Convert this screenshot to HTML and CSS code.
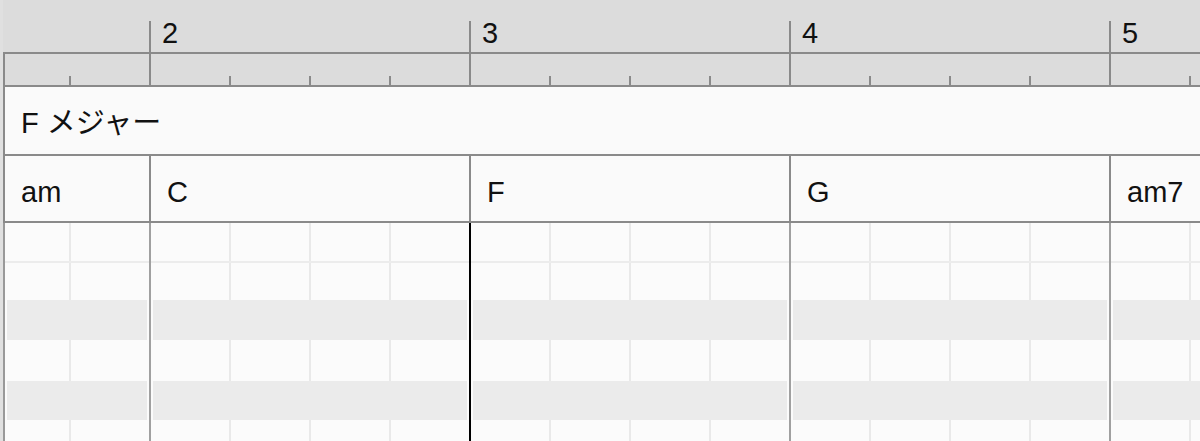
FILE: index.html
```html
<!DOCTYPE html>
<html>
    <head>
        <meta charset="utf-8" />
        <title>Chord Track</title>
        <link rel="stylesheet" href="styles.css">
    </head>
    <body>
        <div class="roll">
            <!-- Bar ruler -->
            <div class="ruler">
                <div class="numbers">
                    <div class="num-bar partial"></div>
                    <div class="num-bar">2</div>
                    <div class="num-bar">3</div>
                    <div class="num-bar">4</div>
                    <div class="num-bar">5</div>
                </div>
                <div class="ticks">
                    <div class="tick-bar partial">
                        <div class="tick"></div>
                        <div class="tick"></div>
                    </div>
                    <div class="tick-bar">
                        <div class="tick"></div>
                        <div class="tick"></div>
                        <div class="tick"></div>
                        <div class="tick"></div>
                    </div>
                    <div class="tick-bar">
                        <div class="tick"></div>
                        <div class="tick"></div>
                        <div class="tick"></div>
                        <div class="tick"></div>
                    </div>
                    <div class="tick-bar">
                        <div class="tick"></div>
                        <div class="tick"></div>
                        <div class="tick"></div>
                        <div class="tick"></div>
                    </div>
                    <div class="tick-bar">
                        <div class="tick"></div>
                        <div class="tick"></div>
                        <div class="tick"></div>
                        <div class="tick"></div>
                    </div>
                </div>
            </div>

            <!-- Key -->
            <div class="key-row">F メジャー</div>

            <!-- Chords -->
            <div class="chords">
                <div class="chord partial">am</div>
                <div class="chord">C</div>
                <div class="chord">F</div>
                <div class="chord">G</div>
                <div class="chord">am7</div>
            </div>

            <!-- Note grid -->
            <div class="grid">
                <div class="col partial">
                    <div class="row white first"></div>
                    <div class="row white second"></div>
                    <div class="row shade"></div>
                    <div class="row white fourth"></div>
                    <div class="row shade fifth"></div>
                    <div class="row white last"></div>
                </div>
                <div class="col">
                    <div class="row white first"></div>
                    <div class="row white second"></div>
                    <div class="row shade"></div>
                    <div class="row white fourth"></div>
                    <div class="row shade fifth"></div>
                    <div class="row white last"></div>
                </div>
                <div class="col playhead">
                    <div class="row white first"></div>
                    <div class="row white second"></div>
                    <div class="row shade"></div>
                    <div class="row white fourth"></div>
                    <div class="row shade fifth"></div>
                    <div class="row white last"></div>
                </div>
                <div class="col">
                    <div class="row white first"></div>
                    <div class="row white second"></div>
                    <div class="row shade"></div>
                    <div class="row white fourth"></div>
                    <div class="row shade fifth"></div>
                    <div class="row white last"></div>
                </div>
                <div class="col">
                    <div class="row white first"></div>
                    <div class="row white second"></div>
                    <div class="row shade"></div>
                    <div class="row white fourth"></div>
                    <div class="row shade fifth"></div>
                    <div class="row white last"></div>
                </div>
            </div>
        </div>
    </body>
</html>
```

FILE: styles.css
```css
* {
    box-sizing: border-box;
}

body {
    margin: 0;
    height: 441px;
    overflow: hidden;
    background-color: #e0e0e0;
    font-family: "Liberation Sans", "Noto Sans CJK JP", sans-serif;
    font-size: 29px;
    color: #111;
}

.roll {
    margin-left: 3px;
    height: 441px;
    overflow: hidden;
    display: flex;
    flex-direction: column;
}

/* Ruler */
.ruler {
    background-color: #dcdcdc;
    border-bottom: 2px solid #8a8a8a;
}

.numbers {
    display: flex;
    height: 52px;
    padding-left: 2px;
}

.num-bar {
    flex: none;
    width: 320px;
    height: 31px;
    margin-top: 21px;
    padding: 1px 0 0 11px;
    line-height: 22px;
    border-left: 2px solid #8a8a8a;
}

.num-bar.partial {
    width: 144px;
    border-left: none;
}

.ticks {
    display: flex;
    height: 33px;
    border-top: 2px solid #8a8a8a;
    border-left: 2px solid #8a8a8a;
}

.tick-bar {
    flex: none;
    display: flex;
    align-items: flex-end;
    width: 320px;
    border-left: 2px solid #8a8a8a;
}

.tick-bar.partial {
    width: 144px;
    border-left: none;
}

.tick {
    flex: none;
    width: 80px;
    height: 9px;
    border-left: 2px solid #8a8a8a;
}

.tick:first-child {
    width: 78px;
    border-left: none;
}

.tick-bar.partial .tick:first-child {
    width: 64px;
}

/* Key and chord rows */
.key-row {
    flex: none;
    height: 69px;
    padding: 5px 0 0 16px;
    line-height: 62px;
    background-color: #fafafa;
    border-left: 2px solid #8a8a8a;
    border-bottom: 2px solid #8a8a8a;
}

.chords {
    flex: none;
    display: flex;
    height: 67px;
    background-color: #fafafa;
    border-left: 2px solid #8a8a8a;
    border-bottom: 2px solid #8a8a8a;
}

.chord {
    flex: none;
    width: 320px;
    padding: 7px 0 0 16px;
    line-height: 58px;
    border-left: 2px solid #8a8a8a;
}

.chord.partial {
    width: 144px;
    border-left: none;
}

/* Grid */
.grid {
    flex: 1;
    display: flex;
    border-left: 2px solid #999;
}

.col {
    flex: none;
    display: flex;
    flex-direction: column;
    width: 320px;
    background-color: #fbfbfb;
    border-left: 2px solid #a0a0a0;
}

.col.partial {
    width: 144px;
    border-left: none;
}

.col.playhead {
    border-left-color: #000;
}

.row {
    flex: none;
    height: 40px;
}

.row.white {
    background-image: repeating-linear-gradient(to right, transparent 0 78px, #e9e9e9 78px 80px);
}

.col.partial .row.white {
    background-position: -14px 0;
}

.row.first {
    border-bottom: 2px solid #ececec;
}

.row.second {
    height: 37px;
}

.row.fourth {
    height: 41px;
}

.row.fifth {
    height: 39px;
}

.row.last {
    flex: 1;
}

.row.shade {
    margin: 0 2px;
    background-color: #ebebeb;
}
```
